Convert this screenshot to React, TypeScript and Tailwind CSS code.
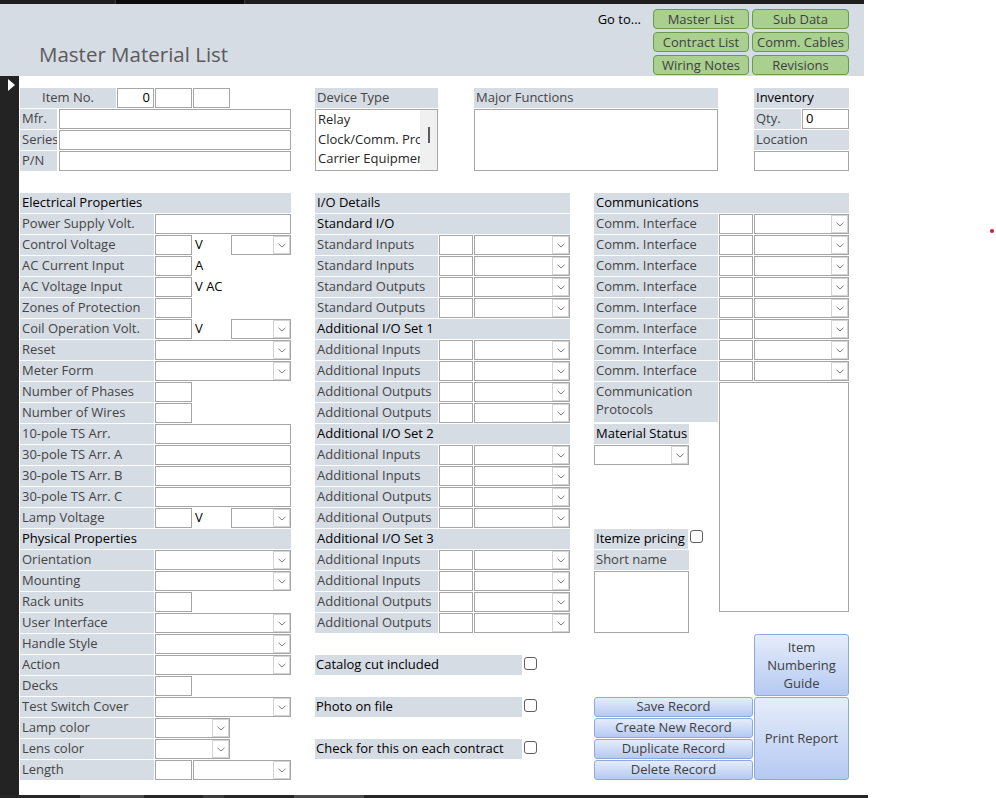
import React from 'react'

type Row =
  | { t: 'h'; l: string }
  | { t: 'text' | 'combo' | 'small' | 'volt' | 'med' | 'len'; l: string }
  | { t: 'unit'; l: string; u: string }

const hdr = 'h-[20px] bg-[#d6dce4] leading-[18px] pl-[2px] text-black whitespace-nowrap'

function Label({ w, dark, children }: { w: string; dark?: boolean; children: React.ReactNode }) {
  return (
    <div
      className={`${w} shrink-0 h-[20px] bg-[#d6dce4] leading-[18px] pl-[2px] whitespace-nowrap overflow-hidden ${
        dark ? 'text-black' : 'text-[#444444]'
      }`}
    >
      {children}
    </div>
  )
}

function Box({ w, h = 'h-[20px]', className = '', children }: { w: string; h?: string; className?: string; children?: React.ReactNode }) {
  return <div className={`${w} ${h} shrink-0 border border-[#a6a6a6] bg-white leading-[16px] text-black ${className}`}>{children}</div>
}

function Combo({ w }: { w: string }) {
  return (
    <div className={`${w} h-[20px] shrink-0 border border-[#a6a6a6] bg-white flex justify-end`}>
      <div className="w-[17px] border border-[#d4d4d4] bg-white flex items-center justify-center">
        <svg width="8" height="5" viewBox="0 0 8 5">
          <path d="M0.5 0.8 L4 4 L7.5 0.8" fill="none" stroke="#7d7d7d" strokeWidth="1" />
        </svg>
      </div>
    </div>
  )
}

function Check({ className = '' }: { className?: string }) {
  return <div className={`w-[13px] h-[13px] shrink-0 rounded-[3px] border border-[#5f5f5f] bg-white ${className}`} />
}

function BlueBtn({ className = '', children }: { className?: string; children: React.ReactNode }) {
  return (
    <div
      className={`rounded-[3px] border border-[#8eaadc] bg-linear-to-b from-[#e6edfb] to-[#b5c9f1] text-[#404040] text-center flex items-center justify-center ${className}`}
    >
      {children}
    </div>
  )
}

const left: Row[] = [
  { t: 'h', l: 'Electrical Properties' },
  { t: 'text', l: 'Power Supply Volt.' },
  { t: 'volt', l: 'Control Voltage' },
  { t: 'unit', l: 'AC Current Input', u: 'A' },
  { t: 'unit', l: 'AC Voltage Input', u: 'V AC' },
  { t: 'small', l: 'Zones of Protection' },
  { t: 'volt', l: 'Coil Operation Volt.' },
  { t: 'combo', l: 'Reset' },
  { t: 'combo', l: 'Meter Form' },
  { t: 'small', l: 'Number of Phases' },
  { t: 'small', l: 'Number of Wires' },
  { t: 'text', l: '10-pole TS Arr.' },
  { t: 'text', l: '30-pole TS Arr. A' },
  { t: 'text', l: '30-pole TS Arr. B' },
  { t: 'text', l: '30-pole TS Arr. C' },
  { t: 'volt', l: 'Lamp Voltage' },
  { t: 'h', l: 'Physical Properties' },
  { t: 'combo', l: 'Orientation' },
  { t: 'combo', l: 'Mounting' },
  { t: 'small', l: 'Rack units' },
  { t: 'combo', l: 'User Interface' },
  { t: 'combo', l: 'Handle Style' },
  { t: 'combo', l: 'Action' },
  { t: 'small', l: 'Decks' },
  { t: 'combo', l: 'Test Switch Cover' },
  { t: 'med', l: 'Lamp color' },
  { t: 'med', l: 'Lens color' },
  { t: 'len', l: 'Length' },
]

const ioSet = (n: string): string[] => [n, 'Additional Inputs', 'Additional Inputs', 'Additional Outputs', 'Additional Outputs']
const middle: string[] = [
  '#I/O Details',
  '#Standard I/O',
  'Standard Inputs',
  'Standard Inputs',
  'Standard Outputs',
  'Standard Outputs',
  ...ioSet('#Additional I/O Set 1'),
  ...ioSet('#Additional I/O Set 2'),
  ...ioSet('#Additional I/O Set 3'),
]

const goto = ['Master List', 'Sub Data', 'Contract List', 'Comm. Cables', 'Wiring Notes', 'Revisions']

function LeftRow({ row }: { row: Row }) {
  if (row.t === 'h') return <div className={hdr}>{row.l}</div>
  let field: React.ReactNode = null
  if (row.t === 'text') field = <Box w="w-[136px]" />
  if (row.t === 'combo') field = <Combo w="w-[136px]" />
  if (row.t === 'small') field = <Box w="w-[37px]" />
  if (row.t === 'med') field = <Combo w="w-[75px]" />
  if (row.t === 'unit')
    field = (
      <>
        <Box w="w-[37px]" />
        <span className="pl-[2px] leading-[18px] text-black">{row.u}</span>
      </>
    )
  if (row.t === 'volt')
    field = (
      <>
        <Box w="w-[37px]" />
        <span className="w-[37px] shrink-0 pl-[2px] leading-[18px] text-black">V</span>
        <Combo w="w-[60px]" />
      </>
    )
  if (row.t === 'len')
    field = (
      <>
        <Box w="w-[37px]" />
        <Combo w="w-[98px]" />
      </>
    )
  return (
    <div className="flex gap-px h-[20px]">
      <Label w="w-[134px]">{row.l}</Label>
      {field}
    </div>
  )
}

export default function App() {
  return (
    <div className="relative w-[996px] h-[798px] bg-white overflow-hidden flex flex-col font-['Open_Sans',sans-serif] text-[13px]">
      {/* window tabs strip */}
      <div className="w-[864px] h-[4px] shrink-0 flex">
        <div className="w-[115px] bg-[#1e1e1e]" />
        <div className="w-px bg-[#3a3a3a]" />
        <div className="w-[128px] bg-[#0b0b0b]" />
        <div className="w-px bg-[#3a3a3a]" />
        <div className="flex-1 bg-[#1e1e1e]" />
      </div>

      {/* form header */}
      <header className="w-[864px] h-[72px] shrink-0 bg-[#d6dce4] flex">
        <div className="pl-[39px] pt-[36px] text-[20.5px] leading-[28px] text-[#5a5a5a] whitespace-nowrap">Master Material List</div>
        <div className="ml-auto pr-[15px] pt-[5px] flex items-start gap-[12px]">
          <div className="leading-[20px] text-black">Go to...</div>
          <div className="grid grid-cols-[96px_97px] gap-[3px]">
            {goto.map((g) => (
              <div
                key={g}
                className="h-[20px] rounded-[4px] border border-[#6b9a4b] bg-[#a9d08e] text-[#404040] leading-[18px] text-center whitespace-nowrap"
              >
                {g}
              </div>
            ))}
          </div>
        </div>
      </header>

      <div className="flex h-[719px] shrink-0">
        {/* record selector */}
        <div className="w-[19px] shrink-0 bg-[#232323] pt-[3px] pl-[8px]">
          <svg width="8" height="12" viewBox="0 0 8 12">
            <path d="M0 0 L7 6 L0 12 Z" fill="#ffffff" />
          </svg>
        </div>

        <main className="w-[845px] pl-px pt-[12px] flex flex-col">
          {/* top block */}
          <section className="flex h-[83px]">
            <div className="w-[271px] flex flex-col gap-px">
              <div className="flex gap-px h-[20px]">
                <div className="w-[96px] bg-[#d6dce4] text-center leading-[18px] text-[#444444]">Item No.</div>
                <Box w="w-[37px]" className="text-right pr-[3px]">
                  0
                </Box>
                <Box w="w-[37px]" />
                <Box w="w-[37px]" />
              </div>
              {['Mfr.', 'Series', 'P/N'].map((l) => (
                <div key={l} className="flex gap-[2px] h-[20px]">
                  <Label w="w-[37px]">{l}</Label>
                  <Box w="w-[232px]" />
                </div>
              ))}
            </div>

            <div className="ml-[24px] w-[123px] flex flex-col gap-px">
              <Label w="w-[123px]">Device Type</Label>
              <div className="h-[62px] border border-[#a6a6a6] bg-white flex">
                <div className="flex-1 pl-[2px] leading-[19.5px] text-[#262626] overflow-hidden whitespace-nowrap">
                  Relay
                  <br />
                  Clock/Comm. Processor
                  <br />
                  Carrier Equipment
                </div>
                <div className="w-[17px] shrink-0 bg-[#f0f0f0] flex justify-center pt-[17px]">
                  <div className="w-[2px] h-[16px] bg-[#5a5a5a]" />
                </div>
              </div>
            </div>

            <div className="ml-[36px] w-[244px] flex flex-col gap-px">
              <Label w="w-[244px]">Major Functions</Label>
              <Box w="w-[244px]" h="h-[62px]" />
            </div>

            <div className="ml-[36px] w-[95px] flex flex-col gap-px">
              <Label w="w-[95px]" dark>
                Inventory
              </Label>
              <div className="flex gap-px h-[20px]">
                <Label w="w-[47px]">Qty.</Label>
                <Box w="w-[47px]" className="pl-[3px]">
                  0
                </Box>
              </div>
              <Label w="w-[95px]">Location</Label>
              <Box w="w-[95px]" />
            </div>
          </section>

          {/* three columns */}
          <section className="mt-[22px] flex">
            <div className="w-[271px] flex flex-col gap-px">
              {left.map((r, i) => (
                <LeftRow key={i} row={r} />
              ))}
            </div>

            <div className="ml-[24px] w-[255px] flex flex-col">
              <div className="flex flex-col gap-px">
                {middle.map((m, i) =>
                  m.startsWith('#') ? (
                    <div key={i} className={hdr}>
                      {m.slice(1)}
                    </div>
                  ) : (
                    <div key={i} className="flex gap-px h-[20px]">
                      <Label w="w-[123px]">{m}</Label>
                      <Box w="w-[34px]" />
                      <Combo w="w-[96px]" />
                    </div>
                  )
                )}
              </div>
              <div className="mt-[22px] flex flex-col gap-[22px]">
                {['Catalog cut included', 'Photo on file', 'Check for this on each contract'].map((c) => (
                  <div key={c} className="flex">
                    <div className="w-[207px] h-[20px] bg-[#d6dce4] leading-[18px] pl-px text-black whitespace-nowrap">{c}</div>
                    <Check className="ml-[2px] mt-[2px]" />
                  </div>
                ))}
              </div>
            </div>

            <div className="ml-[24px] w-[255px] flex flex-col">
              <div className="flex flex-col gap-px">
                <div className={hdr}>Communications</div>
                {Array.from({ length: 8 }).map((_, i) => (
                  <div key={i} className="flex gap-px h-[20px]">
                    <Label w="w-[124px]">Comm. Interface</Label>
                    <Box w="w-[34px]" />
                    <Combo w="w-[95px]" />
                  </div>
                ))}
              </div>

              <div className="mt-px flex">
                <div className="w-[124px] flex flex-col">
                  <div className="h-[40px] bg-[#d6dce4] leading-[18px] pl-[2px] text-[#444444]">
                    Communication
                    <br />
                    Protocols
                  </div>
                  <div className="mt-[2px]">
                    <Label w="w-[95px]" dark>
                      Material Status
                    </Label>
                  </div>
                  <div className="mt-px">
                    <Combo w="w-[95px]" />
                  </div>
                  <div className="mt-[64px] flex">
                    <Label w="w-[94px]" dark>
                      Itemize pricing
                    </Label>
                    <Check className="ml-[2px] mt-px" />
                  </div>
                  <div className="mt-px">
                    <Label w="w-[95px]">Short name</Label>
                  </div>
                  <div className="mt-px">
                    <Box w="w-[95px]" h="h-[62px]" />
                  </div>
                </div>
                <div className="ml-px">
                  <Box w="w-[130px]" h="h-[230px]" />
                </div>
              </div>

              <div className="mt-px flex h-[146px]">
                <div className="w-[159px] flex flex-col justify-end gap-px">
                  <BlueBtn className="h-[20px]">Save Record</BlueBtn>
                  <BlueBtn className="h-[20px]">Create New Record</BlueBtn>
                  <BlueBtn className="h-[20px]">Duplicate Record</BlueBtn>
                  <BlueBtn className="h-[20px]">Delete Record</BlueBtn>
                </div>
                <div className="ml-px w-[95px] flex flex-col gap-px">
                  <BlueBtn className="h-[62px] leading-[18px]">
                    Item
                    <br />
                    Numbering
                    <br />
                    Guide
                  </BlueBtn>
                  <BlueBtn className="h-[83px]">Print Report</BlueBtn>
                </div>
              </div>
            </div>
          </section>
        </main>
      </div>

      {/* bottom scroll strip */}
      <div className="w-[868px] h-[3px] shrink-0 bg-[#262626] flex">
        <div className="ml-[80px] w-[64px] bg-[#4a4a4a]" />
        <div className="ml-[59px] w-[21px] bg-[#3c3c3c]" />
        <div className="ml-[70px] w-[70px] bg-[#4a4a4a]" />
      </div>

      <div className="absolute left-[990px] top-[229px] w-[4px] h-[4px] rounded-full bg-[#e81123]" />
    </div>
  )
}
